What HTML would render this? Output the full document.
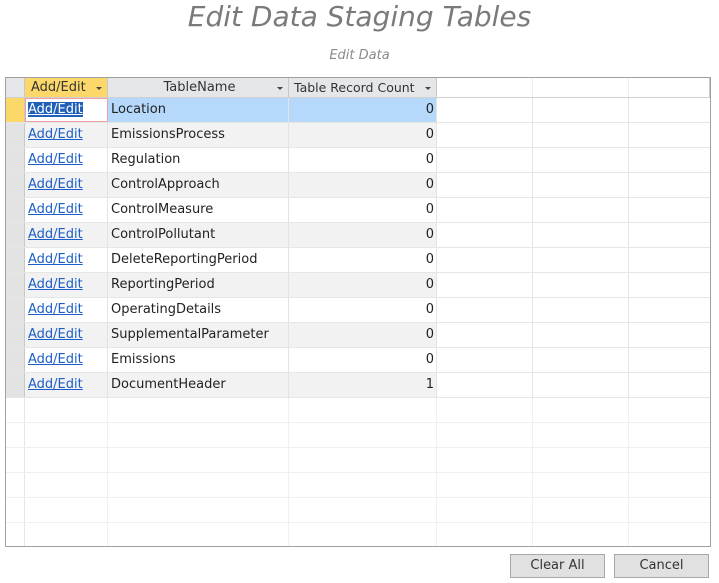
<!DOCTYPE html>
<html><head><style>
*{box-sizing:border-box;margin:0;padding:0}
body{width:719px;height:583px;background:#fff;font-family:"Segoe UI","DejaVu Sans","Liberation Sans",sans-serif;position:relative;overflow:hidden;font-size:13px;color:#222}
.a{position:absolute}
h1{position:absolute;left:0;width:719px;top:0;text-align:center;font:italic 28px "DejaVu Sans","Liberation Sans",sans-serif;color:#7a7a7a;font-weight:normal}
.sub{left:0;width:719px;top:48px;text-align:center;font:italic 13px "DejaVu Sans",sans-serif;color:#8a8a8a}
.grid{left:5px;top:77px;width:706px;height:470px;border:1px solid #a0a0a0;background:#fff;overflow:hidden}
.row{position:absolute;left:0;width:704px;height:25px;border-bottom:1px solid #e6e6e6}
.c{position:absolute;top:0;height:100%;border-right:1px solid #e3e3e3;line-height:24px;white-space:nowrap;overflow:hidden}
.sel{left:0;width:19px;background:#e3e3e3;border-right:1px solid #c8c8c8}
.c1{left:19px;width:83px;padding-left:3px}
.c2{left:102px;width:181px;padding-left:3px}
.c3{left:283px;width:148px;text-align:right;padding-right:2px}
.c4{left:431px;width:96px}.c5{left:527px;width:96px}.c6{left:623px;width:81px;border-right:none}
a{color:#1b5ec8;text-decoration:underline}
.hdr{top:0;height:20px;background:#fff;border-bottom:1px solid #d0d0d0}
.hdr .c{line-height:19px;background:#e4e6ea;border-right:1px solid #c8c8c8;text-align:center;color:#333}
.arr{position:absolute;right:5px;top:9px;border-left:3px solid transparent;border-right:3px solid transparent;border-top:3px solid #444}
.btn{top:554px;width:95px;height:24px;background:#e1e1e1;border:1px solid #a8a8a8;text-align:center;line-height:21px;font-size:13px;color:#333}
</style></head><body>
<h1>Edit Data Staging Tables</h1>
<div class="a sub">Edit Data</div>
<div class="a grid">
<div class="row hdr">
<div class="c sel" style="background:#e4e6ea"></div>
<div class="c c1" style="background:#fcd86a;text-align:left;padding-left:6px">Add/Edit<span class="arr"></span></div>
<div class="c c2">TableName<span class="arr"></span></div>
<div class="c c3" style="text-align:left;padding-left:5px;font-size:12.5px">Table Record Count<span class="arr"></span></div>
<div class="c c4" style="background:#fff;border-right:1px solid #eee"></div><div class="c c5" style="background:#fff;border-right:1px solid #eee"></div><div class="c c6" style="background:#fff"></div>
</div>
<div id="rows"></div>
</div>
<div class="a btn" style="left:510px">Clear All</div>
<div class="a btn" style="left:614px">Cancel</div>
<script>
(function(){
var n=["Location","EmissionsProcess","Regulation","ControlApproach","ControlMeasure","ControlPollutant","DeleteReportingPeriod","ReportingPeriod","OperatingDetails","SupplementalParameter","Emissions","DocumentHeader"];
var h="";
for(var i=0;i<18;i++){
var y=20+i*25;
if(i<12){
var bg=i%2?"#f2f2f2":"#fff";
var c1=i==0?'<div class="c c1" style="background:#fff;border:1px solid #f0a0a0;padding-left:2px;line-height:22px"><a style="background:#1f5fb8;color:#fff">Add/Edit</a></div>':'<div class="c c1" style="background:'+bg+'"><a>Add/Edit</a></div>';
var b2=i==0?"#b5d8fb":bg;
h+='<div class="row" style="top:'+y+'px"><div class="c sel" style="'+(i==0?"background:#fcd86a":"")+'"></div>'+c1+'<div class="c c2" style="background:'+b2+'">'+n[i]+'</div><div class="c c3" style="background:'+b2+'">'+(i==11?1:0)+'</div><div class="c c4"></div><div class="c c5"></div><div class="c c6"></div></div>';
}else{
h+='<div class="row" style="top:'+y+'px;border-bottom:1px solid #efefef"><div class="c" style="left:0;width:19px;border-right:1px solid #e6e6e6"></div><div class="c c1" style="border-right-color:#f0f0f0"></div><div class="c c2" style="border-right-color:#f0f0f0"></div><div class="c c3" style="border-right-color:#f0f0f0"></div><div class="c c4" style="border-right-color:#f0f0f0"></div><div class="c c5" style="border-right-color:#f0f0f0"></div><div class="c c6"></div></div>';
}}
document.getElementById("rows").innerHTML=h;
})();
</script>
</body></html>
